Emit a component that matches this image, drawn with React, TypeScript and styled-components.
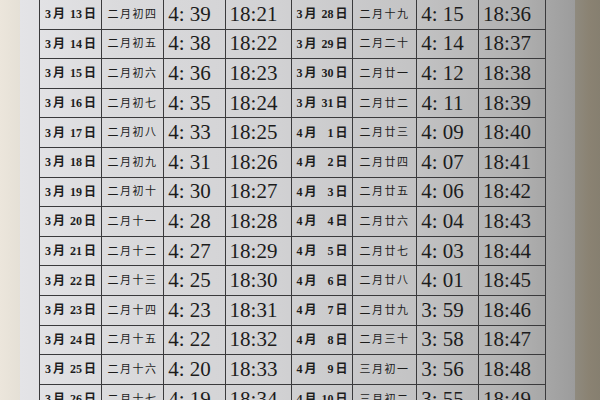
import React from 'react';
import styled, { createGlobalStyle } from 'styled-components';

interface Entry {
    month: number;
    day: number;
    lunar: string;
    rise: string;
    set: string;
}

const left: Entry[] = [
    { month: 3, day: 13, lunar: '二月初四', rise: '4: 39', set: '18:21' },
    { month: 3, day: 14, lunar: '二月初五', rise: '4: 38', set: '18:22' },
    { month: 3, day: 15, lunar: '二月初六', rise: '4: 36', set: '18:23' },
    { month: 3, day: 16, lunar: '二月初七', rise: '4: 35', set: '18:24' },
    { month: 3, day: 17, lunar: '二月初八', rise: '4: 33', set: '18:25' },
    { month: 3, day: 18, lunar: '二月初九', rise: '4: 31', set: '18:26' },
    { month: 3, day: 19, lunar: '二月初十', rise: '4: 30', set: '18:27' },
    { month: 3, day: 20, lunar: '二月十一', rise: '4: 28', set: '18:28' },
    { month: 3, day: 21, lunar: '二月十二', rise: '4: 27', set: '18:29' },
    { month: 3, day: 22, lunar: '二月十三', rise: '4: 25', set: '18:30' },
    { month: 3, day: 23, lunar: '二月十四', rise: '4: 23', set: '18:31' },
    { month: 3, day: 24, lunar: '二月十五', rise: '4: 22', set: '18:32' },
    { month: 3, day: 25, lunar: '二月十六', rise: '4: 20', set: '18:33' },
    { month: 3, day: 26, lunar: '二月十七', rise: '4: 19', set: '18:34' },
];

const right: Entry[] = [
    { month: 3, day: 28, lunar: '二月十九', rise: '4: 15', set: '18:36' },
    { month: 3, day: 29, lunar: '二月二十', rise: '4: 14', set: '18:37' },
    { month: 3, day: 30, lunar: '二月廿一', rise: '4: 12', set: '18:38' },
    { month: 3, day: 31, lunar: '二月廿二', rise: '4: 11', set: '18:39' },
    { month: 4, day: 1, lunar: '二月廿三', rise: '4: 09', set: '18:40' },
    { month: 4, day: 2, lunar: '二月廿四', rise: '4: 07', set: '18:41' },
    { month: 4, day: 3, lunar: '二月廿五', rise: '4: 06', set: '18:42' },
    { month: 4, day: 4, lunar: '二月廿六', rise: '4: 04', set: '18:43' },
    { month: 4, day: 5, lunar: '二月廿七', rise: '4: 03', set: '18:44' },
    { month: 4, day: 6, lunar: '二月廿八', rise: '4: 01', set: '18:45' },
    { month: 4, day: 7, lunar: '二月廿九', rise: '3: 59', set: '18:46' },
    { month: 4, day: 8, lunar: '二月三十', rise: '3: 58', set: '18:47' },
    { month: 4, day: 9, lunar: '三月初一', rise: '3: 56', set: '18:48' },
    { month: 4, day: 10, lunar: '三月初二', rise: '3: 55', set: '18:49' },
];

const columns = [62, 62, 62, 66, 61, 64, 62, 67];

const GlobalStyle = createGlobalStyle`
    html, body {
        margin: 0;
        padding: 0;
        width: 600px;
        height: 400px;
        overflow: hidden;
        background: #8a8476;
    }
`

const Scene = styled.div`
    display: flex;
    width: 600px;
    height: 400px;
    overflow: hidden;
`

const Desk = styled.div<{ side: 'left' | 'right' }>`
    flex: none;
    width: ${({ side }) => side === 'left' ? 20 : 25}px;
    background: ${({ side }) => side === 'left'
        ? 'linear-gradient(90deg, #ece6dc, #e5e0d6)'
        : 'linear-gradient(90deg, #8f8a7e, #8a8272 60%, #867f70)'};
`

const Paper = styled.div`
    flex: 1;
    padding-left: 19px;
    background: linear-gradient(90deg, #e4e4e7 0%, #dadadc 18%, #d2d2d4 45%, #c4c4c5 70%, #b0b0b0 90%, #9c9c9c 100%);
    overflow: hidden;
`

const Table = styled.table`
    border-collapse: collapse;
    margin-top: -1px;
    table-layout: fixed;
    width: 506px;
    color: #1c1c1c;
`

const Row = styled.tr`
    height: 29.6px;
`

const Cell = styled.td<{ kind: 'date' | 'lunar' | 'time' }>`
    border: 1.5px solid #3a3a3c;
    padding: 0 ${({ kind }) => kind === 'time' ? '10px' : '0'} 0 0;
    text-align: center;
    white-space: nowrap;
    overflow: hidden;
    font-family: ${({ kind }) => kind === 'time'
        ? '"Liberation Serif", "DejaVu Serif", serif'
        : '"Liberation Serif", "Noto Sans CJK SC", serif'};
    font-size: ${({ kind }) => kind === 'time' ? '21px' : kind === 'lunar' ? '11px' : '12px'};
    font-weight: ${({ kind }) => kind === 'date' ? 700 : 400};
    letter-spacing: ${({ kind }) => kind === 'lunar' ? '1.5px' : 'normal'};
    line-height: 1;
`

const Month = styled.span`
    margin-right: 2px;
`

const Day = styled.span`
    display: inline-block;
    width: 14px;
    text-align: right;
    margin: 0 2px 0 3px;
`

const DateText = ({ month, day }: { month: number; day: number }) => <>
    <Month>{month}</Month>月<Day>{day}</Day>日
</>

const App = () => {
    return <Scene>
        <GlobalStyle />
        <Desk side="left" />
        <Paper>
            <Table>
                <colgroup>
                    {columns.map((w, i) => <col key={i} style={{ width: w }} />)}
                </colgroup>
                <tbody>
                    {left.map((l, index) => {
                        const r = right[index];
                        return <Row key={index}>
                            <Cell kind="date"><DateText month={l.month} day={l.day} /></Cell>
                            <Cell kind="lunar">{l.lunar}</Cell>
                            <Cell kind="time">{l.rise}</Cell>
                            <Cell kind="time">{l.set}</Cell>
                            <Cell kind="date"><DateText month={r.month} day={r.day} /></Cell>
                            <Cell kind="lunar">{r.lunar}</Cell>
                            <Cell kind="time">{r.rise}</Cell>
                            <Cell kind="time">{r.set}</Cell>
                        </Row>
                    })}
                </tbody>
            </Table>
        </Paper>
        <Desk side="right" />
    </Scene>
}

export default App;
